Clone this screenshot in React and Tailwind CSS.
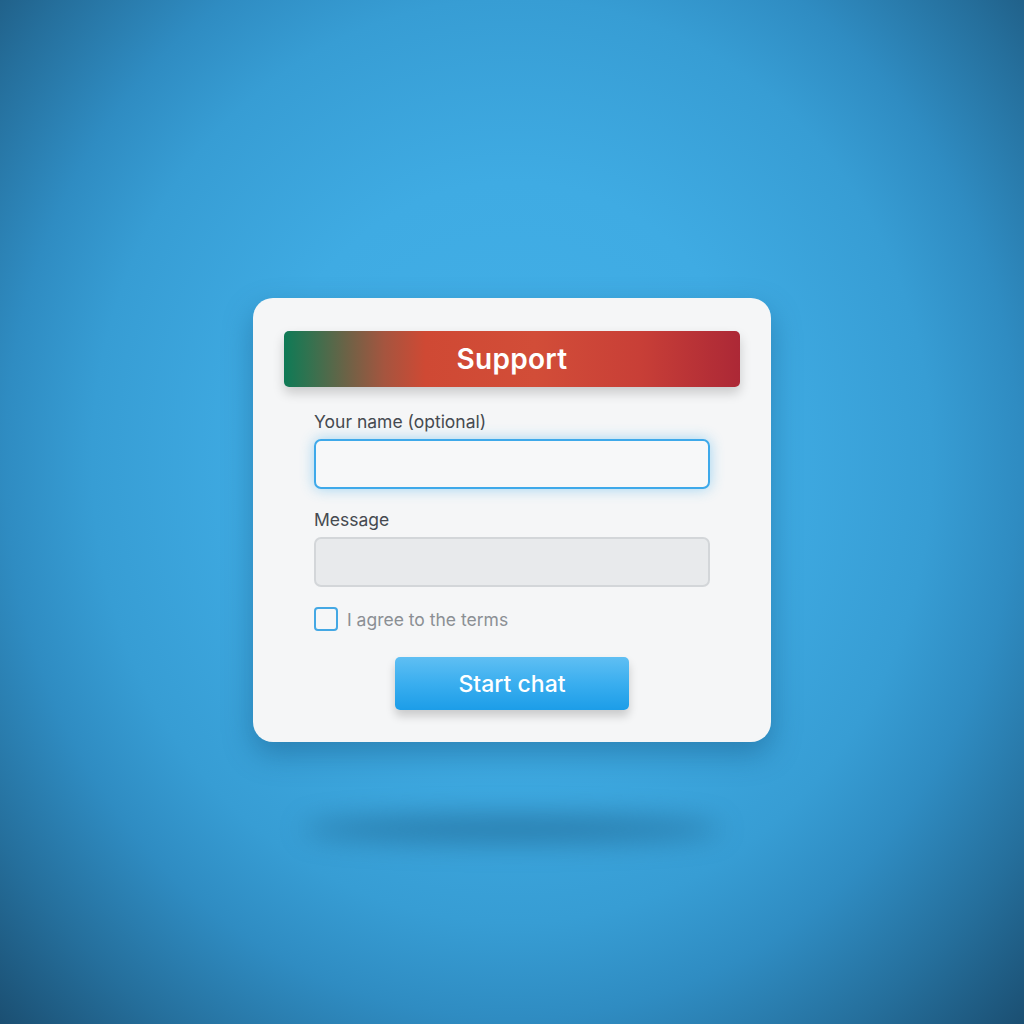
export default function App() {
  return (
    <div
      className="relative h-[1024px] w-full overflow-hidden flex flex-col items-center pt-[298px] bg-[radial-gradient(ellipse_farthest-corner_at_50%_45%,#43b0e8_0%,#3fabe3_35%,#379dd4_58%,#2f8cc2_70%,#256f9c_85%,#1b4f72_100%)]"
      style={{ fontFamily: 'Inter, "Noto Sans", sans-serif' }}
    >
      {/* card */}
      <div className="relative z-10 w-[518px] h-[444px] rounded-[20px] bg-[#f5f6f7] px-[31px] pt-[33px] shadow-[0_12px_30px_rgba(10,60,100,0.35)]">
        <div className="h-[56px] rounded-[5px] flex items-center justify-center bg-[linear-gradient(90deg,#0e7a56_0%,#2f7350_5%,#6e6246_14%,#a5553f_22%,#cf4934_31%,#d24d38_55%,#c83f37_78%,#ac2836_100%)] shadow-[0_6px_12px_rgba(0,0,0,0.18)]">
          <span className="text-white text-[28px] font-semibold tracking-[0.3px]">Support</span>
        </div>

        <div className="px-[30px] pt-[24px]">
          <label className="block text-[17.5px] text-[#454a50] leading-[22px]">Your name (optional)</label>
          <div className="mt-[6px] h-[50px] rounded-[7px] border-2 border-[#3ea9ea] bg-[#f7f8f9] shadow-[0_0_14px_rgba(56,170,235,0.45)]" />

          <label className="block mt-[20px] text-[17.5px] text-[#454a50] leading-[22px]">Message</label>
          <div className="mt-[6px] h-[50px] rounded-[7px] border-2 border-[#d3d6d9] bg-[#e8eaec]" />

          <div className="mt-[19px] flex items-center gap-[9px]">
            <div className="w-[24px] h-[24px] rounded-[4px] border-[2.5px] border-[#44a8e4] bg-[#f6f7f8]" />
            <span className="text-[17.5px] text-[#8b8f94] translate-y-[1px]">I agree to the terms</span>
          </div>

          <div className="mt-[25px] flex justify-center">
            <button className="w-[234px] h-[53px] rounded-[5px] bg-[linear-gradient(180deg,#5fbff3_0%,#3aaeef_50%,#1c9de8_100%)] text-white text-[23px] font-medium shadow-[0_6px_10px_rgba(0,0,0,0.18)]">
              Start chat
            </button>
          </div>
        </div>
      </div>

      {/* floor shadow */}
      <div className="mt-[74px] w-[420px] h-[26px] rounded-[50%] bg-[#1c5f88] opacity-60 blur-[14px]" />
    </div>
  )
}
